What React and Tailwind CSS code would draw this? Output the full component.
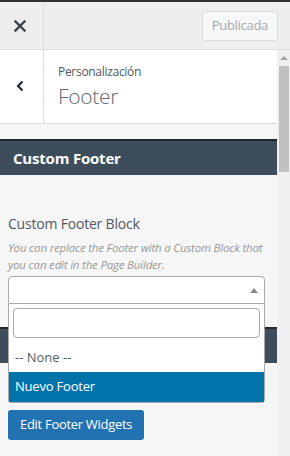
import { useState } from 'react'

const FONT = { fontFamily: '"Open Sans", "Noto Sans", sans-serif' }

function CloseIcon() {
  return (
    <svg width="12" height="12" viewBox="0 0 12 12" className="text-[#3c434a]">
      <path d="M1.5 1.5 L10.5 10.5 M10.5 1.5 L1.5 10.5" stroke="currentColor" strokeWidth="2.4" strokeLinecap="square" />
    </svg>
  )
}

function BackIcon() {
  return (
    <svg width="10" height="12" viewBox="0 0 10 12" className="text-[#23282d]">
      <path d="M7.5 1.5 L3 6 L7.5 10.5" stroke="currentColor" strokeWidth="2.2" fill="none" />
    </svg>
  )
}

function SectionBar({ children }) {
  return (
    <div className="border-t-2 border-[#23282d] bg-[#3e4d5c] h-[36px] flex items-center px-[13px]">
      {children && <span className="text-white font-bold text-[15px] tracking-[-0.2px]">{children}</span>}
    </div>
  )
}

export default function App() {
  const [selected] = useState('Nuevo Footer')

  return (
    <div style={FONT} className="w-[290px] h-[456px] overflow-hidden bg-[#f6f6f6] flex flex-col">
      {/* top header */}
      <div className="border-t-2 border-[#2c3338] bg-[#eeeeee] h-[50px] border-b border-b-[#dcdcde] flex items-stretch">
        <button className="w-[44px] border-r border-[#dcdcde] flex items-center justify-center pr-[3px]">
          <CloseIcon />
        </button>
        <div className="flex-1 flex items-center justify-end pr-[12px]">
          <span className="h-[30px] px-[9px] flex items-center border border-[#dcdcde] rounded-[3px] bg-[#f6f7f7] text-[#a7aaad] text-[13px] tracking-[-0.3px]">
            Publicada
          </span>
        </div>
      </div>

      <div className="flex flex-1 min-h-0">
        {/* panel */}
        <div className="w-[277px] flex flex-col">
          <div className="bg-white h-[74px] border-b border-[#dddddd] flex">
            <div className="w-[44px] border-r border-[#dddddd] flex items-center justify-center pb-[1px] pr-[4px]">
              <BackIcon />
            </div>
            <div className="pl-[14px] pt-[13px] text-[#50575e]">
              <div className="text-[12px] leading-[18px] tracking-[-0.3px]">Personalización</div>
              <div className="text-[21px] leading-[28px] font-light text-[#646970] tracking-[-0.3px] mt-[1px]">Footer</div>
            </div>
          </div>

          <div className="mt-[15px]">
            <SectionBar>Custom Footer</SectionBar>
          </div>

          <div className="px-[8px] pt-[39px]">
            <div className="text-[14px] leading-[20px] text-[#50575e] font-medium tracking-[-0.2px]">Custom Footer Block</div>
            <p className="mt-[5px] text-[11.5px] leading-[17px] italic text-[#999999] tracking-[-0.2px]">
              You can replace the Footer with a Custom Block that you can edit in the Page Builder.
            </p>

            <div className="relative mt-[3px] w-[257px]">
              <div className="h-[28px] border border-[#a7aaad] rounded-t-[4px] bg-white flex items-center justify-end pr-[6px]">
                <span className="w-0 h-0 border-x-[4px] border-x-transparent border-b-[5px] border-b-[#888888]" />
              </div>
              <div className="absolute left-0 right-0 top-full z-10 bg-white border-x border-b border-[#a7aaad] rounded-b-[4px]">
                <div className="p-[4px]">
                  <div className="h-[30px] border border-[#aaaaaa] rounded-[4px]" />
                </div>
                <div className="h-[30px] flex items-center px-[6px] pt-[2px] text-[13px] text-[#555d66]">-- None --</div>
                <div className="h-[30px] flex items-center px-[6px] text-[13px] text-white bg-[#0073aa] tracking-[-0.2px]">{selected}</div>
              </div>
            </div>
          </div>

          <div className="mt-[23px]">
            <SectionBar />
          </div>

          <div className="px-[8px] pt-[47px]">
            <button className="h-[30px] px-[12px] rounded-[3px] bg-[#2271b1] text-white text-[13px] tracking-[-0.3px]">
              Edit Footer Widgets
            </button>
          </div>
        </div>

        {/* scrollbar */}
        <div className="w-[13px] bg-[#f0f0f0] flex flex-col items-center">
          <div className="h-[16px] flex items-center justify-center">
            <span className="w-0 h-0 border-x-[4px] border-x-transparent border-b-[4px] border-b-[#a3a3a3]" />
          </div>
          <div className="w-[10px] h-[106px] bg-[#c1c1c1]" />
        </div>
      </div>
    </div>
  )
}
